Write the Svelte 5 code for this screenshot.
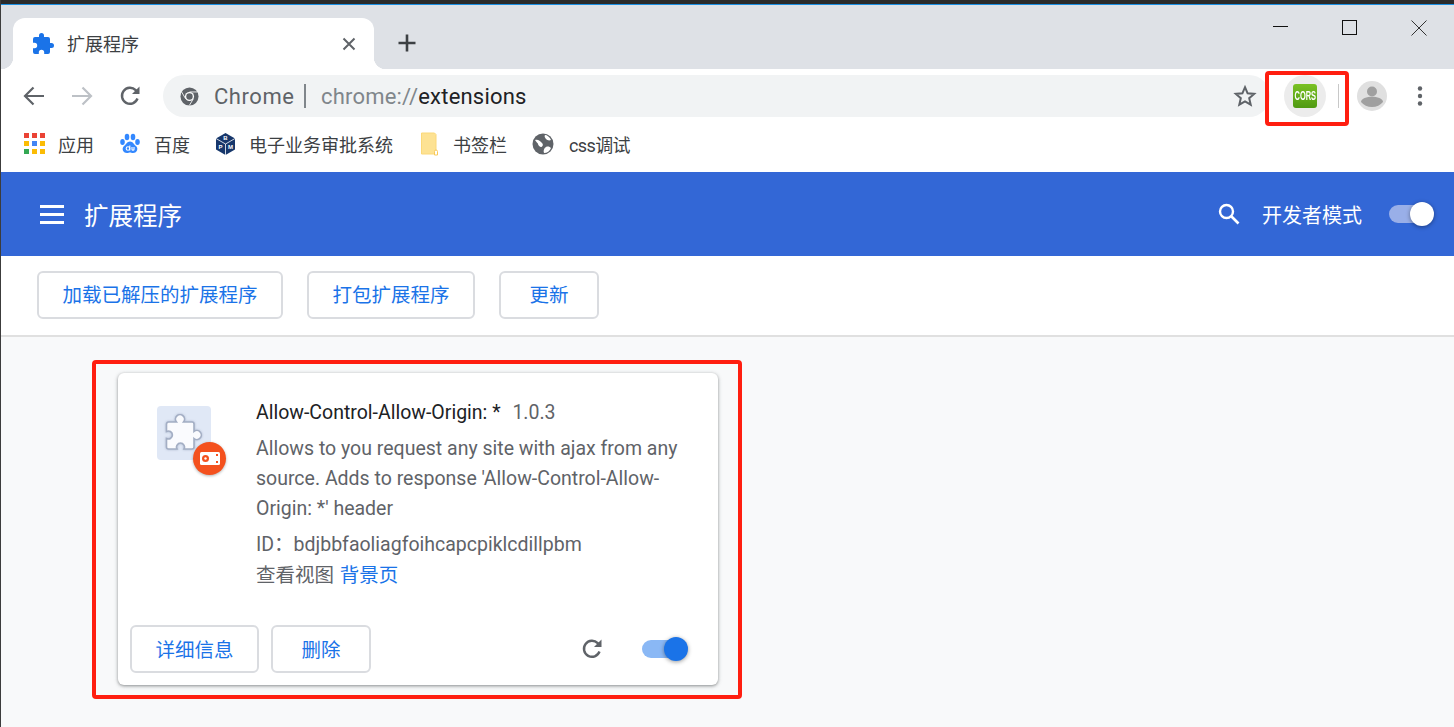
<script>
	const bookmarks = [
		{ id: 'apps', label: '应用' },
		{ id: 'baidu', label: '百度' },
		{ id: 'bpm', label: '电子业务审批系统' },
		{ id: 'folder', label: '书签栏' },
		{ id: 'globe', label: 'css调试' }
	];
	const appColors = ['#ea4335', '#ea4335', '#ea4335', '#fbbc05', '#4285f4', '#fbbc05', '#34a853', '#fbbc05', '#fbbc05'];
</script>

<div class="window">
	<div class="titleEdge"></div>
	<div class="tabStrip">
		<div class="tab">
			<svg class="tabIcon" width="24" height="24" viewBox="0 0 24 24">
				<path fill="#1a73e8" d="M20.5 11H19V7a2 2 0 0 0-2-2h-4V3.5a2.5 2.5 0 0 0-5 0V5H4a2 2 0 0 0-2 2v3.8h1.5a2.7 2.7 0 0 1 0 5.4H2V20a2 2 0 0 0 2 2h3.8v-1.5a2.7 2.7 0 0 1 5.4 0V22H17a2 2 0 0 0 2-2v-4h1.500a2.500 2.500 0 0 0 0-5z" />
			</svg>
			<span class="tabTitle">扩展程序</span>
			<svg class="tabClose" width="14" height="14" viewBox="0 0 14 14">
				<path d="M1.500 1.500l11 11M12.500 1.500l-11 11" stroke="#5f6368" stroke-width="2" />
			</svg>
		</div>
		<svg class="newTab" width="20" height="20" viewBox="0 0 20 20">
			<path d="M10 1.500v17M1.500 10h17" stroke="#3c4043" stroke-width="2.600" />
		</svg>
		<div class="windowControls">
			<svg width="16" height="16" viewBox="0 0 16 16"><path d="M0 6.500h15" stroke="#111" /></svg>
			<svg width="16" height="16" viewBox="0 0 16 16"><rect x="0.500" y="0.500" width="14" height="14" fill="none" stroke="#111" /></svg>
			<svg width="16" height="16" viewBox="0 0 16 16"><path d="M.5.500l15 15M15.500.500l-15 15" stroke="#333" /></svg>
		</div>
	</div>

	<div class="toolbar">
		<svg width="24" height="24" viewBox="0 0 24 24"><path d="M22 12H3.500M11.500 3.500L3 12l8.500 8.500" fill="none" stroke="#5f6368" stroke-width="2.200" /></svg>
		<svg width="24" height="24" viewBox="0 0 24 24"><path d="M2 12h18.500M12.500 3.500L21 12l-8.500 8.500" fill="none" stroke="#bdc1c6" stroke-width="2.200" /></svg>
		<svg width="24" height="24" viewBox="0 0 24 24">
			<path d="M19.500 14.500a8 8 0 1 1-1.800-8.300L20 8.500" fill="none" stroke="#5f6368" stroke-width="2.400" />
			<path d="M21.500 2.500V10h-7.500z" fill="#5f6368" />
		</svg>
		<div class="omnibox">
			<svg class="chromeIcon" width="19" height="19" viewBox="0 0 20 20">
				<circle cx="10" cy="10" r="9.500" fill="#5f6368" />
				<circle cx="10" cy="10" r="4.800" fill="#fff" />
				<circle cx="10" cy="10" r="3.400" fill="#5f6368" />
				<path d="M10 5.200h8.600M5.900 12.400L1.600 5M14.100 12.400L9.800 19.400" stroke="#fff" stroke-width="0.900" />
			</svg>
			<span class="originChip">Chrome</span>
			<span class="chipDivider"></span>
			<span class="url"><span class="urlScheme">chrome://</span>extensions</span>
			<svg class="star" width="24" height="24" viewBox="0 0 24 24">
				<path d="M12 3.200l2.600 6.100 6.600.6-5 4.300 1.500 6.500L12 17.300l-5.700 3.400 1.500-6.500-5-4.300 6.600-.6z" fill="none" stroke="#5f6368" stroke-width="2" />
			</svg>
		</div>
		<div class="extButton">
			<div class="corsBadge"><span>CORS</span></div>
		</div>
		<span class="toolbarDivider"></span>
		<svg class="avatar" width="30" height="30" viewBox="0 0 30 30">
			<circle cx="15" cy="15" r="15" fill="#e0e0e0" />
			<circle cx="15" cy="10.500" r="5" fill="#a0a0a0" />
			<path d="M4 21c0-3.500 6-5.300 11-5.300S26 17.500 26 21c-2.500 3-6.500 5-11 5S6.500 24 4 21z" fill="#a0a0a0" />
		</svg>
		<svg class="menuDots" width="6" height="20" viewBox="0 0 6 20">
			<circle cx="3" cy="2.500" r="2.200" fill="#5f6368" />
			<circle cx="3" cy="10" r="2.200" fill="#5f6368" />
			<circle cx="3" cy="17.500" r="2.200" fill="#5f6368" />
		</svg>
	</div>

	<div class="bookmarks">
		{#each bookmarks as bookmark}
			<div class="bookmark {bookmark.id}">
				{#if bookmark.id === 'apps'}
					<div class="appsGrid">
						{#each appColors as color}
							<span style="background: {color}"></span>
						{/each}
					</div>
				{:else if bookmark.id === 'baidu'}
					<svg width="22" height="22" viewBox="0 0 22 22">
						<ellipse cx="3.500" cy="9" rx="2.300" ry="3" fill="#3388ff" />
						<ellipse cx="8" cy="4" rx="2.300" ry="3.200" fill="#3388ff" />
						<ellipse cx="14" cy="4" rx="2.300" ry="3.200" fill="#3388ff" />
						<ellipse cx="18.500" cy="9" rx="2.300" ry="3" fill="#3388ff" />
						<path d="M11 8.500c3 0 4 3 6 4.500 2.500 2 1.500 7-3 7-1.500 0-2-.5-3-.5s-1.500.5-3 .5c-4.500 0-5.500-5-3-7 2-1.500 3-4.500 6-4.500z" fill="#3388ff" />
						<circle cx="9" cy="15.500" r="1.800" fill="none" stroke="#fff" stroke-width="1.100" />
						<path d="M10.800 12.500v5M13 14v2.500c0 1 2 1 2 0V14" fill="none" stroke="#fff" stroke-width="1.100" />
					</svg>
				{:else if bookmark.id === 'bpm'}
					<svg width="21" height="24" viewBox="0 0 21 24">
						<path d="M10.500 1l9.500 5.500v11L10.500 23 1 17.500v-11z" fill="#17376b" />
						<path d="M1 6.500L10.500 12 20 6.500M10.500 12v11" fill="none" stroke="#fff" stroke-width="0.800" />
						<text x="10.500" y="8" class="cubeLetter">B</text>
						<text x="5.500" y="17" class="cubeLetter">P</text>
						<text x="15.500" y="17" class="cubeLetter">M</text>
					</svg>
				{:else if bookmark.id === 'folder'}
					<svg width="20" height="24" viewBox="0 0 20 24">
						<path d="M1.500 1h13l1.500 1.500V22H1.500z" fill="#fde293" stroke="#fbd878" />
						<path d="M14.500 23v-3.500a1.500 1.500 0 0 1 3 0V23z" fill="#fff" stroke="#f8c95a" />
					</svg>
				{:else}
					<svg class="globeIcon" width="22" height="22" viewBox="0 0 22 22">
						<circle cx="11" cy="11" r="10.500" fill="#5f6368" />
						<path d="M3 7c3-1 5 1 7 3s0 4-1 4-3-2-3-3-2-2-3-4zM12 20c-1-2 0-5 2-6s4 0 5 1c-1 3-4 5-7 5zM13 2c2 0 5 2 6 5-2 1-4 0-5-1s-2-3-1-4z" fill="#fff" />
					</svg>
				{/if}
				<span>{bookmark.label}</span>
			</div>
		{/each}
	</div>

	<header class="pageHeader">
		<div class="menuIcon"><span></span><span></span><span></span></div>
		<h1>扩展程序</h1>
		<svg class="search" width="24" height="24" viewBox="0 0 24 24">
			<circle cx="9.500" cy="9.500" r="6.500" fill="none" stroke="#fff" stroke-width="2.400" />
			<path d="M14.500 14.500l7 7" stroke="#fff" stroke-width="2.600" />
		</svg>
		<span class="devMode">开发者模式</span>
		<div class="toggle onHeader"><span class="knob"></span></div>
	</header>

	<div class="devBar">
		<button>加载已解压的扩展程序</button>
		<button>打包扩展程序</button>
		<button>更新</button>
	</div>

	<main class="content">
		<div class="card">
			<div class="cardMain">
				<div class="iconWrap">
					<div class="iconTile">
						<svg class="puzzle" width="38" height="38" viewBox="0 0 38 38">
							<path d="M3.500 8H11.500a4.500 4.500 0 1 1 7 0H27a2 2 0 0 1 2 2V17.500a4.500 4.500 0 1 1 0 7V33a2 2 0 0 1-2 2H19a4 4 0 1 0-7 0H3.500a2 2 0 0 1-2-2V24.500a4 4 0 1 0 0-7V10a2 2 0 0 1 2-2z" fill="#fafbfe" stroke="#a3aec4" stroke-width="1.600" />
						</svg>
					</div>
					<div class="sourceBadge">
						<svg width="20" height="13" viewBox="0 0 20 13">
							<rect width="20" height="13" rx="1.500" fill="#fff" />
							<circle cx="5.500" cy="6.500" r="3.500" fill="#f4511e" />
							<circle cx="5.500" cy="6.500" r="1.200" fill="#fff" />
							<rect x="16" y="2" width="2" height="2" fill="#f4511e" />
							<rect x="16" y="9" width="2" height="2" fill="#f4511e" />
						</svg>
					</div>
				</div>
				<div class="details">
					<div class="nameRow">
						<span class="name">Allow-Control-Allow-Origin: *</span>
						<span class="version">1.0.3</span>
					</div>
					<p class="description">Allows to you request any site with ajax from any source. Adds to response 'Allow-Control-Allow-Origin: *' header</p>
					<div class="extId">ID：bdjbbfaoliagfoihcapcpiklcdillpbm</div>
					<div class="views">查看视图 <span class="link">背景页</span></div>
				</div>
			</div>
			<div class="cardFooter">
				<button class="small">详细信息</button>
				<button class="small">删除</button>
				<svg class="reload" width="24" height="24" viewBox="0 0 24 24">
					<path d="M19.500 14.500a8 8 0 1 1-1.800-8.300L20 8.500" fill="none" stroke="#5f6368" stroke-width="2.400" />
					<path d="M21.500 2.500V10h-7.500z" fill="#5f6368" />
				</svg>
				<div class="toggle onCard"><span class="knob"></span></div>
			</div>
		</div>
	</main>

	<div class="callout calloutExt"></div>
	<div class="callout calloutCard"></div>
</div>

<style>
	:global(body) {
		margin: 0;
		background: #f8f9fa;
	}

	.window {
		position: relative;
		width: 1454px;
		height: 727px;
		overflow: hidden;
		display: flex;
		flex-direction: column;
		font-family: Roboto, "Noto Sans CJK SC", sans-serif;
		border-left: 1px solid #3c3c3c;
		box-sizing: border-box;
	}

	.titleEdge {
		height: 5px;
		flex: none;
		box-sizing: border-box;
		background: #2b2b2b;
		border-bottom: 1px solid #1a8fe3;
		margin-left: -1px;
	}

	.tabStrip {
		height: 64px;
		flex: none;
		background: #dee1e6;
		display: flex;
		align-items: flex-end;
		padding-left: 12px;
		position: relative;
	}

	.tab {
		width: 361px;
		height: 51px;
		background: #fff;
		border-radius: 12px 12px 0 0;
		display: flex;
		align-items: center;
		position: relative;
		color: #3c4043;
		font-size: 18px;
	}

	.tab::before,
	.tab::after {
		content: '';
		position: absolute;
		bottom: 0;
		width: 12px;
		height: 12px;
	}

	.tab::before {
		left: -12px;
		background: radial-gradient(circle at 0 0, transparent 12px, #fff 12.500px);
	}

	.tab::after {
		right: -12px;
		background: radial-gradient(circle at 100% 0, transparent 12px, #fff 12.500px);
	}

	.tabIcon {
		margin-left: 18px;
	}

	.tabTitle {
		margin: 0 0 2px 12px;
		flex: 1;
	}

	.tabClose {
		margin-right: 18px;
	}

	.newTab {
		margin: 0 0 16px 23px;
	}

	.windowControls {
		position: absolute;
		top: 15px;
		right: 27px;
		display: flex;
		gap: 53px;
	}

	.toolbar {
		height: 49px;
		flex: none;
		background: #fff;
		display: flex;
		align-items: center;
		padding: 5px 0 0 21px;
		box-sizing: border-box;
	}

	.toolbar > svg:nth-child(2) {
		margin-left: 24px;
	}

	.toolbar > svg:nth-child(3) {
		margin-left: 24px;
	}

	.omnibox {
		width: 1107px;
		height: 42px;
		margin-left: 21px;
		background: #f1f3f4;
		border-radius: 21px;
		display: flex;
		align-items: center;
		font-size: 22px;
		color: #5f6368;
	}

	.chromeIcon {
		margin-left: 17px;
	}

	.originChip {
		margin-left: 15px;
		letter-spacing: 0.550px;
	}

	.chipDivider {
		width: 1.500px;
		height: 24px;
		background: #80868b;
		margin: 0 15px 0 10px;
	}

	.urlScheme {
		color: #80868b;
	}

	.url {
		flex: 1;
		color: #202124;
		letter-spacing: 0.200px;
	}

	.star {
		margin-right: 13px;
	}

	.extButton {
		width: 42px;
		height: 42px;
		margin-left: 14px;
		border-radius: 50%;
		background: #ececec;
		display: flex;
		align-items: center;
		justify-content: center;
		flex: none;
	}

	.corsBadge {
		width: 24px;
		height: 24px;
		border-radius: 3px;
		background: linear-gradient(#7ac123, #4f9a12);
		display: flex;
		align-items: center;
		justify-content: center;
		overflow: hidden;
	}

	.corsBadge span {
		color: #fff;
		font: bold 12px "Liberation Sans", sans-serif;
		transform: scaleX(0.62);
		letter-spacing: 0;
	}

	.toolbarDivider {
		width: 1px;
		height: 24px;
		background: #c8c8c8;
		margin-left: 12px;
		flex: none;
	}

	.avatar {
		margin-left: 18px;
		flex: none;
	}

	.menuDots {
		margin-left: 30px;
		flex: none;
	}

	.bookmarks {
		height: 54px;
		flex: none;
		background: #fff;
		display: flex;
		align-items: center;
		padding: 0 0 3px 23px;
		box-sizing: border-box;
		gap: 25px;
		font-size: 18px;
		color: #3c4043;
	}

	.bookmark {
		display: flex;
		align-items: center;
		gap: 13px;
	}

	.bookmark.folder {
		margin-left: 2px;
	}

	.bookmark.globe span {
		letter-spacing: -0.600px;
	}

	.globeIcon {
		margin-right: 2px;
	}

	.cubeLetter {
		fill: #fff;
		font: bold 6px "Liberation Sans", sans-serif;
		text-anchor: middle;
	}

	.appsGrid {
		display: grid;
		grid-template-columns: repeat(3, 5px);
		grid-auto-rows: 5px;
		gap: 3px;
	}

	.pageHeader {
		height: 84px;
		flex: none;
		background: #3367d6;
		display: flex;
		align-items: center;
		padding-left: 39px;
		color: #fff;
	}

	.menuIcon {
		display: flex;
		flex-direction: column;
		gap: 5px;
		width: 24px;
	}

	.menuIcon span {
		height: 3px;
		background: #fff;
	}

	h1 {
		margin: 0 0 0 20px;
		font-size: 24.500px;
		font-weight: 400;
		flex: 1;
	}

	.search {
		margin-right: 21px;
	}

	.devMode {
		font-size: 20px;
	}

	.toggle {
		position: relative;
		width: 41px;
		height: 18px;
		border-radius: 9px;
		flex: none;
	}

	.knob {
		position: absolute;
		right: -5px;
		top: -3px;
		width: 24px;
		height: 24px;
		border-radius: 50%;
		box-shadow: 0 1px 4px rgba(0, 0, 0, 0.4);
	}

	.onHeader {
		width: 40px;
		background: #99afe8;
		margin: 0 25px 0 27px;
	}

	.onHeader .knob {
		background: #fff;
	}

	.onCard {
		background: #8ab8f5;
		margin: 0 23px 0 26px;
	}

	.onCard .knob {
		background: #1a73e8;
	}

	.devBar {
		height: 81px;
		flex: none;
		background: #fff;
		border-bottom: 2px solid #e0e0e0;
		display: flex;
		align-items: center;
		gap: 24px;
		padding: 0 0 2px 36px;
		box-sizing: border-box;
	}

	button {
		height: 48px;
		padding: 0 23.500px 2px;
		background: #fff;
		border: 2px solid #dadce0;
		border-radius: 6px;
		color: #1a73e8;
		font: 19.500px Roboto, "Noto Sans CJK SC", sans-serif;
	}

	.devBar button:nth-child(3) {
		width: 100px;
		padding: 0 0 2px;
	}

	.content {
		flex: 1;
		background: #f8f9fa;
		padding: 36px 0 0 117px;
		min-height: 0;
	}

	.card {
		width: 600px;
		height: 312px;
		background: #fff;
		border-radius: 6px;
		box-shadow: 0 1px 3px rgba(60, 64, 67, 0.45), 0 1px 5px rgba(60, 64, 67, 0.2);
		display: flex;
		flex-direction: column;
		box-sizing: border-box;
		padding: 25px 12px 12px;
	}

	.cardMain {
		flex: 1;
		display: flex;
	}

	.iconWrap {
		position: relative;
		width: 54px;
		height: 54px;
		margin: 8px 0 0 27px;
		flex: none;
	}

	.iconTile {
		width: 54px;
		height: 54px;
		border-radius: 4px;
		background: #e0e8f6;
		display: flex;
		align-items: center;
		justify-content: center;
	}

	.puzzle {
		filter: drop-shadow(0 0 1px rgba(120, 135, 165, 0.5));
	}

	.sourceBadge {
		position: absolute;
		left: 36px;
		top: 36px;
		width: 33px;
		height: 33px;
		border-radius: 50%;
		background: #f4511e;
		box-shadow: 0 1px 3px rgba(0, 0, 0, 0.3);
		display: flex;
		align-items: center;
		justify-content: center;
	}

	.details {
		margin-left: 45px;
		width: 440px;
		font-size: 19.500px;
		line-height: 30px;
		color: #5f6368;
	}

	.nameRow {
		height: 30px;
	}

	.name {
		color: #202124;
	}

	.version {
		margin-left: 7px;
	}

	.description {
		margin: 6px 0;
	}

	.extId,
	.views {
		height: 30px;
	}

	.views {
		position: relative;
		top: 1px;
	}

	.link {
		color: #1a73e8;
		margin-left: 1px;
	}

	.cardFooter {
		display: flex;
		align-items: center;
		gap: 12px;
		height: 48px;
		flex: none;
	}

	.small:first-child {
		width: 129px;
		padding: 0 0 2px;
	}

	.small:nth-child(2) {
		width: 100px;
		padding: 0 0 2px;
	}

	.reload {
		margin-left: auto;
	}

	.callout {
		position: absolute;
		border: 4px solid #ff1e10;
		border-radius: 4px;
		box-sizing: border-box;
		pointer-events: none;
	}

	.calloutExt {
		left: 1264px;
		top: 71px;
		width: 84px;
		height: 55px;
	}

	.calloutCard {
		left: 91px;
		top: 360px;
		width: 650px;
		height: 339px;
	}
</style>
